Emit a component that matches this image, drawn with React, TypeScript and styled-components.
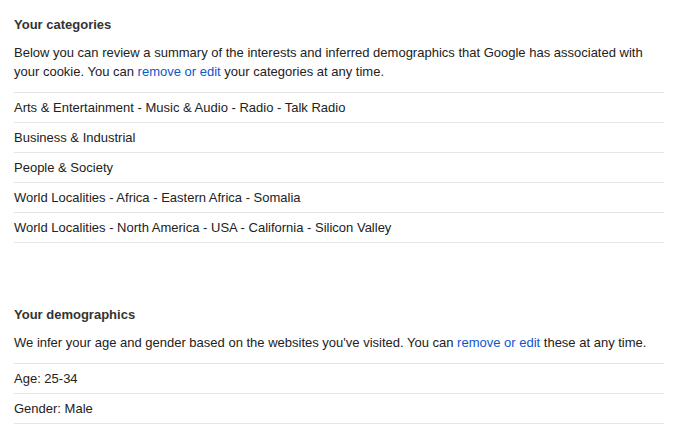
import styled, { createGlobalStyle } from 'styled-components';

const GlobalStyle = createGlobalStyle`
    body {
        margin: 0;
        background: #fff;
        font-family: Arial, "Liberation Sans", sans-serif;
        font-size: 13px;
        color: #222;
    }
`;

const Page = styled.div`
    width: 650px;
    padding: 16px 0 0 14px;
    display: flex;
    flex-direction: column;
    gap: 63px;
`;

const Section = styled.section`
    display: flex;
    flex-direction: column;
`;

const Title = styled.h2`
    margin: 0 0 10px;
    font-size: 13px;
    line-height: 17px;
    font-weight: bold;
    color: #333;
`;

const Intro = styled.p`
    margin: 0 0 11px;
    line-height: 19px;
    color: #222;
`;

const Link = styled.a`
    color: #15c;
    text-decoration: none;
    cursor: pointer;
`;

const List = styled.ul`
    list-style: none;
    margin: 0;
    padding: 0;
    border-top: 1px solid #e5e5e5;
`;

const Row = styled.li`
    height: 29px;
    line-height: 29px;
    border-bottom: 1px solid #e5e5e5;
    color: #222;
`;

const categories = [
    'Arts & Entertainment - Music & Audio - Radio - Talk Radio',
    'Business & Industrial',
    'People & Society',
    'World Localities - Africa - Eastern Africa - Somalia',
    'World Localities - North America - USA - California - Silicon Valley',
];

const demographics = ['Age: 25-34', 'Gender: Male'];

export default function App() {
    return (
        <>
            <GlobalStyle />
            <Page>
                <Section>
                    <Title>Your categories</Title>
                    <Intro>
                        Below you can review a summary of the interests and inferred demographics that Google has associated with
                        your cookie. You can <Link>remove or edit</Link> your categories at any time.
                    </Intro>
                    <List>
                        {categories.map(c => (
                            <Row key={c}>{c}</Row>
                        ))}
                    </List>
                </Section>
                <Section>
                    <Title>Your demographics</Title>
                    <Intro>
                        We infer your age and gender based on the websites you've visited. You can <Link>remove or edit</Link> these at any time.
                    </Intro>
                    <List>
                        {demographics.map(d => (
                            <Row key={d}>{d}</Row>
                        ))}
                    </List>
                </Section>
            </Page>
        </>
    );
}
